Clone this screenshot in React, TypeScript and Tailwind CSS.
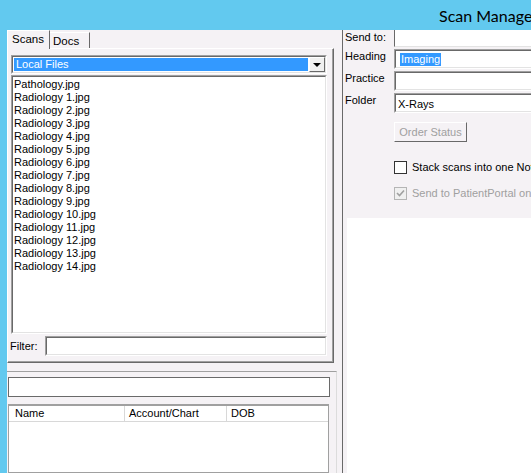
import type { ReactNode } from 'react';

const files = [
  'Pathology.jpg',
  'Radiology 1.jpg',
  'Radiology 2.jpg',
  'Radiology 3.jpg',
  'Radiology 4.jpg',
  'Radiology 5.jpg',
  'Radiology 6.jpg',
  'Radiology 7.jpg',
  'Radiology 8.jpg',
  'Radiology 9.jpg',
  'Radiology 10.jpg',
  'Radiology 11.jpg',
  'Radiology 12.jpg',
  'Radiology 13.jpg',
  'Radiology 14.jpg',
];

// classic two-tone sunken edit box
function Sunken({ className, children }: { className?: string; children?: ReactNode }) {
  return (
    <div className={`shrink-0 border border-t-[#a0a0a0] border-l-[#a0a0a0] border-b-white border-r-white ${className ?? ''}`}>
      <div className="h-full border border-t-[#696969] border-l-[#696969] border-b-[#e3e3e3] border-r-[#e3e3e3] bg-white overflow-hidden">
        {children}
      </div>
    </div>
  );
}

function Field({ label, first, children }: { label: string; first?: boolean; children?: ReactNode }) {
  return (
    <div className={`flex items-start ${first ? '' : 'mt-[2px]'}`}>
      <span className="w-[49px] shrink-0 leading-[13px] pt-[1px]">{label}</span>
      {first ? (
        <div className="w-[160px] shrink-0 h-[17px] border-l border-l-[#696969] border-b border-b-[#e3e3e3] bg-white" />
      ) : (
        <Sunken className="w-[160px] h-[20px]">{children}</Sunken>
      )}
    </div>
  );
}

export default function App() {
  return (
    <div className="w-[531px] h-[473px] overflow-hidden bg-[#62c9ef] flex flex-col font-['Liberation_Sans',Arial,sans-serif] text-[11px] text-black">
      {/* title bar */}
      <div className="h-[30px] shrink-0 flex items-center pl-[439px] whitespace-nowrap font-['Lato',sans-serif] text-[16px] pt-[1px]">
        Scan Manager
      </div>

      <div className="flex-1 flex ml-[7px] bg-[#f5f2f5] min-h-0">
        {/* left pane */}
        <div className="w-[335px] shrink-0 flex flex-col min-h-0">
          {/* tabs */}
          <div className="h-[18px] shrink-0 flex items-end relative z-10">
            <div className="w-[43px] h-[19px] -mb-px bg-[#f5f2f5] border-t border-l border-white border-r border-r-[#696969] pl-[4px] pt-[2px] leading-[13px] text-[11.5px]">
              Scans
            </div>
            <div className="w-[40px] h-[16px] bg-[#f5f2f5] border-t border-t-white border-r border-r-[#696969] pl-[3px] pt-[2px] leading-[13px] text-[11.5px]">
              Docs
            </div>
          </div>

          {/* tab panel */}
          <div className="w-[327px] h-[315px] shrink-0 border-t border-l border-white border-r border-b border-r-[#696969] border-b-[#696969]">
            <div className="h-full border-r border-b border-r-[#a0a0a0] border-b-[#a0a0a0] pl-[3px] pt-[6px]">
              {/* dropdown */}
              <Sunken className="w-[316px] h-[19px]">
                <div className="h-full flex">
                  <div className="flex-1 m-[1px] bg-[#3399ff] text-white pl-[2px] leading-[13px]">Local Files</div>
                  <div className="w-[16px] h-full border border-t-white border-l-white border-b-[#696969] border-r-[#696969] bg-[#f0f0f0] flex items-center justify-center">
                    <div className="w-0 h-0 border-l-[4px] border-r-[4px] border-t-[4px] border-l-transparent border-r-transparent border-t-black" />
                  </div>
                </div>
              </Sunken>

              {/* file list */}
              <Sunken className="w-[316px] h-[259px] mt-[1px]">
                <div className="pl-[1px] pt-[1px]">
                  {files.map(f => (
                    <div key={f} className="leading-[13px] whitespace-nowrap">{f}</div>
                  ))}
                </div>
              </Sunken>

              {/* filter */}
              <div className="flex items-center mt-[2px] -ml-px">
                <span className="w-[35px] shrink-0 leading-[13px]">Filter:</span>
                <Sunken className="w-[282px] h-[20px]" />
              </div>
            </div>
          </div>

          {/* lower section */}
          <div className="mt-[8px] flex-1 min-h-0 flex flex-col w-[330px] border-t border-t-[#a0a0a0] border-r border-r-[#dcdcdc] pl-[1px] pt-[5px]">
            <div className="w-[322px] h-[20px] shrink-0 border border-[#6a6a6a] bg-white" />
            <div className="w-[321px] flex-1 mt-[7px] border border-[#a0a0a0] border-t-2 bg-white">
              <div className="h-[16px] flex border-b border-b-[#d8d8d8] leading-[13px]">
                <div className="w-[116px] pl-[6px] border-r border-r-[#d8d8d8] pt-[1px]">Name</div>
                <div className="w-[102px] pl-[4px] border-r border-r-[#d8d8d8] pt-[1px]">Account/Chart</div>
                <div className="flex-1 pl-[4px] pt-[1px]">DOB</div>
              </div>
            </div>
          </div>
        </div>

        {/* right pane */}
        <div className="flex-1 border-l border-l-[#696969] overflow-hidden flex flex-col">
          <div className="pl-[2px] pb-[18px]">
            <Field label="Send to:" first />
            <Field label="Heading">
              <span className="inline-block ml-[4px] mt-[2px] px-px bg-[#3399ff] text-white leading-[13px]">Imaging</span>
            </Field>
            <Field label="Practice" />
            <Field label="Folder">
              <div className="pl-[2px] pt-[3px] leading-[13px]">X-Rays</div>
            </Field>

            <div className="ml-[49px] mt-[9px] w-[73px] h-[20px] border border-t-white border-l-white border-b-[#696969] border-r-[#696969] flex items-center justify-center text-[#a0a0a0] leading-[13px]">
              Order Status
            </div>

            <div className="ml-[49px] mt-[19px] flex items-center gap-[5px] whitespace-nowrap">
              <div className="w-[13px] h-[13px] shrink-0 border border-[#333333] bg-white" />
              <span className="leading-[13px]">Stack scans into one Note</span>
            </div>

            <div className="ml-[49px] mt-[13px] flex items-center gap-[5px] whitespace-nowrap text-[#a0a0a0]">
              <div className="w-[13px] h-[13px] shrink-0 border border-[#b5b5b5] bg-[#f0f0f0] flex items-center justify-center">
                <svg width="9" height="9" viewBox="0 0 9 9">
                  <path d="M1 4 L3.5 6.5 L8 1.5" fill="none" stroke="#a0a0a0" strokeWidth="1.6" />
                </svg>
              </div>
              <span className="leading-[13px]">Send to PatientPortal on</span>
            </div>
          </div>
          <div className="flex-1 ml-[4px] bg-white" />
        </div>
      </div>
    </div>
  );
}
